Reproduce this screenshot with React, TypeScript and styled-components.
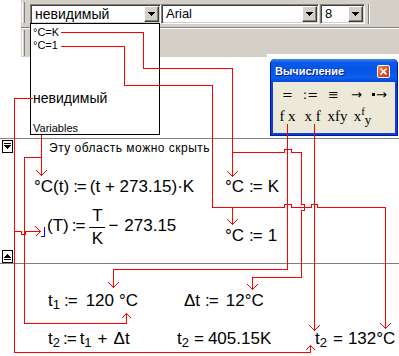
import React from "react";
import styled, { createGlobalStyle } from "styled-components";

const GlobalStyle = createGlobalStyle`
  html, body { margin: 0; padding: 0; background: #fff; }
  #root { width: 399px; height: 356px; }
`;

const Page = styled.div`
  position: relative;
  width: 399px;
  height: 356px;
  overflow: hidden;
  background: #fff;
  color: #000;
  font-family: "Liberation Sans", Arial, sans-serif;
  display: flex;
  flex-direction: column;
`;

/* ---------- toolbar ---------- */
const Toolbar = styled.div`
  margin-left: 21px;
  height: 57px;
  flex: none;
  background: #d4d0c8;
  display: flex;
  flex-direction: column;
`;
const Band = styled.div<{ $h: number; $pt: number }>`
  height: ${(p) => p.$h}px;
  padding: ${(p) => p.$pt}px 0 0 1px;
  box-sizing: border-box;
  display: flex;
  align-items: flex-start;
`;
const Etch = styled.div`
  height: 2px;
  box-sizing: border-box;
  border-top: 1px solid #808080;
  border-bottom: 1px solid #fff;
`;
const Gripper = styled.div<{ $h: number; $mt: number }>`
  width: 3px;
  height: ${(p) => p.$h}px;
  margin-top: ${(p) => p.$mt}px;
  margin-right: 5px;
  box-sizing: border-box;
  border-left: 1px solid #fff;
  border-right: 1px solid #808080;
`;
const Combo = styled.div<{ $w: number; $ml?: number }>`
  width: ${(p) => p.$w}px;
  margin-left: ${(p) => p.$ml ?? 0}px;
  height: 20px;
  box-sizing: border-box;
  display: flex;
  background: #fff;
  border: 1px solid;
  border-color: #808080 #fff #fff #808080;
  box-shadow: inset 1px 1px 0 #404040, inset -1px -1px 0 #d4d0c8;
  padding: 1px;
`;
const ComboText = styled.div<{ $size?: number }>`
  flex: 1;
  padding-left: 3px;
  font-family: "Liberation Sans", Arial, sans-serif;
  font-size: ${(p) => p.$size ?? 13}px;
  line-height: 16px;
  white-space: nowrap;
  overflow: hidden;
`;
const DropButton = styled.div`
  width: 15px;
  height: 16px;
  box-sizing: border-box;
  background: #d4d0c8;
  border: 1px solid;
  border-color: #fff #404040 #404040 #fff;
  box-shadow: inset -1px -1px 0 #808080;
  display: flex;
  align-items: center;
  justify-content: center;
`;
const VSep = styled.div`
  width: 2px;
  height: 20px;
  margin-left: 3px;
  box-sizing: border-box;
  border-left: 1px solid #808080;
  border-right: 1px solid #fff;
`;

const DownTri = () => (
  <svg width="7" height="4" viewBox="0 0 7 4" shapeRendering="crispEdges">
    <polygon points="0,0 7,0 3.5,4" fill="#000" />
  </svg>
);

/* ---------- style dropdown list ---------- */
const StyleList = styled.div`
  position: absolute;
  left: 30px;
  top: 23px;
  width: 130px;
  height: 112px;
  box-sizing: border-box;
  border: 1px solid #000;
  background: #fff;
  padding: 2px 0 0 2px;
  display: flex;
  flex-direction: column;
  z-index: 2;
`;
const StyleItem = styled.div<{ $size: number; $lh: number; $mt: number }>`
  font-size: ${(p) => p.$size}px;
  line-height: ${(p) => p.$lh}px;
  margin-top: ${(p) => p.$mt}px;
  white-space: nowrap;
`;

/* ---------- floating palette ---------- */
const Float = styled.div`
  position: absolute;
  left: 267px;
  top: 54px;
  width: 132px;
  box-sizing: border-box;
  padding: 5px 1px 0 3px;
  background: #fff;
  z-index: 2;
`;
const Win = styled.div`
  width: 128px;
  height: 77px;
  box-sizing: border-box;
  display: flex;
  flex-direction: column;
  background: #0b3fd8;
  border: 1px solid #001a9e;
  border-top: none;
  border-radius: 5px 5px 0 0;
  padding: 0 2px 2px 2px;
`;
const TitleBar = styled.div`
  height: 23px;
  flex: none;
  margin: 0 -2px;
  display: flex;
  align-items: center;
  justify-content: space-between;
  padding: 0 7px 0 4px;
  background: linear-gradient(#3d8bf8 0%, #0a5ce8 14%, #0553e4 45%, #0a5ef0 80%, #0546d4 100%);
  border-radius: 5px 5px 0 0;
  color: #fff;
  font: bold 11px "Liberation Sans", Arial, sans-serif;
  text-shadow: 1px 1px 0 #0a1e8c;
`;
const CloseBtn = styled.div`
  width: 13px;
  height: 13px;
  box-sizing: border-box;
  margin-top: 1px;
  border: 1px solid #fff;
  border-radius: 2px;
  background: linear-gradient(135deg, #f08a6a 0%, #e2532c 45%, #c93a16 100%);
  display: flex;
  align-items: center;
  justify-content: center;
`;
const PaletteBody = styled.div`
  flex: 1;
  background: #ece9d8;
  padding-top: 1px;
  display: flex;
  flex-direction: column;
`;
const PaletteRow = styled.div<{ $cols: number; $cw: number; $pl: number; $serif?: boolean }>`
  height: 22px;
  display: grid;
  grid-template-columns: repeat(${(p) => p.$cols}, ${(p) => p.$cw}px);
  padding-left: ${(p) => p.$pl}px;
  align-items: center;
  justify-items: center;
  font-family: ${(p) => (p.$serif ? '"Liberation Serif", "Times New Roman", serif' : '"DejaVu Sans", sans-serif')};
  font-size: ${(p) => (p.$serif ? 15 : 13)}px;
  line-height: 1;
  white-space: nowrap;
`;
const EvalIcon = styled.span`
  display: flex;
  align-items: center;
  gap: 1px;
`;
const Dot = styled.span`
  width: 3px;
  height: 3px;
  background: #000;
`;
const Sup = styled.span`
  font-size: 11px;
  vertical-align: 6px;
  line-height: 0;
`;
const SubS = styled.span`
  font-size: 13px;
  vertical-align: -3px;
  line-height: 0;
`;

/* ---------- worksheet ---------- */
const Worksheet = styled.div`
  flex: 1;
  padding-top: 81px;
`;
const Collapsible = styled.section`
  height: 126px;
  box-sizing: border-box;
  border-top: 1px solid #808080;
  border-bottom: 1px solid #808080;
  padding: 1px 0 0 2px;
  display: flex;
  flex-direction: column;
  justify-content: space-between;
`;
const HeadRow = styled.div`
  display: flex;
  align-items: flex-start;
`;
const ToggleBox = styled.div`
  width: 11px;
  height: 13px;
  box-sizing: border-box;
  border: 1px solid #000;
  background: #fff;
  display: flex;
  align-items: center;
  justify-content: center;
`;
const Note = styled.div`
  margin: 1px 0 0 36px;
  font: 12px/14px "Liberation Sans", Arial, sans-serif;
  letter-spacing: 0.5px;
  white-space: nowrap;
`;

const CollapseIcon = ({ up }: { up?: boolean }) => (
  <svg width="9" height="11" viewBox="0 0 9 11" shapeRendering="crispEdges">
    {up ? (
      <>
        <polygon points="4.5,3 1,7 8,7" fill="#000" />
        <rect x="1" y="8" width="7" height="1" fill="#000" />
      </>
    ) : (
      <>
        <rect x="1" y="2" width="7" height="1" fill="#000" />
        <polygon points="1,4 8,4 4.5,8" fill="#000" />
      </>
    )}
  </svg>
);

/* ---------- math regions ---------- */
const Region = styled.div<{ $x: number; $y: number }>`
  position: absolute;
  left: ${(p) => p.$x}px;
  top: ${(p) => p.$y}px;
  display: flex;
  align-items: flex-start;
  font: 17px/20px "Liberation Sans", Arial, sans-serif;
  white-space: pre;
  z-index: 1;
`;
const Tok = styled.span<{ $ml?: number; $mt?: number }>`
  margin-left: ${(p) => p.$ml ?? 0}px;
  margin-top: ${(p) => p.$mt ?? 0}px;
`;
const Assign = styled(Tok)`
  letter-spacing: -1px;
`;
const Sub = styled.span`
  font-size: 13px;
  vertical-align: -3px;
  line-height: 0;
`;
const Placeholder = styled.span`
  width: 4px;
  height: 10px;
  margin-top: 20px;
  box-sizing: border-box;
  border-right: 1px solid #0000ff;
  border-bottom: 1px solid #0000ff;
`;
const Fraction = styled.span<{ $ml: number }>`
  margin-left: ${(p) => p.$ml}px;
  display: flex;
  flex-direction: column;
  align-items: center;
  width: 16px;
  line-height: 18px;
`;
const FracBar = styled.span`
  align-self: stretch;
  height: 1px;
  margin: 2px 0;
  background: #000;
`;

/* ---------- wires ---------- */
const Wires = styled.svg`
  position: absolute;
  left: 0;
  top: 0;
  z-index: 3;
  pointer-events: none;
`;

type Pt = [number, number];
const wires: Pt[][] = [
  [[60, 32], [143, 32], [143, 68], [232, 68], [232, 152], [284, 152], [284, 149], [291, 149], [291, 152], [301, 152], [301, 204], [304, 204], [304, 210], [301, 210], [301, 277], [252, 277], [252, 289]],
  [[232, 152], [232, 176]],
  [[60, 46], [124, 46], [124, 85], [212, 85], [212, 207], [284, 207], [284, 204], [291, 204], [291, 207], [311, 207], [311, 204], [317, 204], [317, 207], [385, 207], [385, 328]],
  [[232, 207], [232, 224]],
  [[32, 98], [14, 98], [14, 352], [310, 352], [310, 345]],
  [[14, 231], [21, 231], [21, 234], [25, 234], [25, 231], [40, 231]],
  [[41, 134], [41, 175]],
  [[41, 157], [24, 157], [24, 323], [126, 323], [126, 313]],
  [[287, 123], [287, 269], [113, 269], [113, 287]],
  [[314, 123], [314, 330]],
];
const arrows: [number, number, "d" | "u" | "r"][] = [
  [232, 176, "d"], [252, 289, "d"], [232, 224, "d"], [385, 328, "d"], [310, 345, "u"],
  [40, 231, "r"], [41, 175, "d"], [126, 313, "u"], [113, 287, "d"], [314, 330, "d"],
];
const toPath = (pts: Pt[]) =>
  pts.map(([x, y], i) => `${i ? "L" : "M"}${x + 0.5} ${y + 0.5}`).join(" ");
const arrowPts = (x: number, y: number, d: string): Pt[] => {
  const s = 5;
  if (d === "d") return [[x - s, y - s], [x, y], [x + s, y - s]];
  if (d === "u") return [[x - s, y + s], [x, y], [x + s, y + s]];
  return [[x - s, y - s], [x, y], [x - s, y + s]];
};

export default function App() {
  return (
    <>
      <GlobalStyle />
      <Page>
        <Toolbar>
          <Band $h={27} $pt={4}>
            <Gripper $h={21} $mt={-2} />
            <Combo $w={131}>
              <ComboText $size={14}>невидимый</ComboText>
              <DropButton><DownTri /></DropButton>
            </Combo>
            <Combo $w={158} $ml={0}>
              <ComboText $size={13}>Arial</ComboText>
              <DropButton><DownTri /></DropButton>
            </Combo>
            <Combo $w={45} $ml={1}>
              <ComboText $size={13}>8</ComboText>
              <DropButton><DownTri /></DropButton>
            </Combo>
            <VSep />
          </Band>
          <Etch />
          <Band $h={28} $pt={1}>
            <Gripper $h={26} $mt={0} />
          </Band>
        </Toolbar>

        <Worksheet>
          <Collapsible>
            <HeadRow>
              <ToggleBox><CollapseIcon /></ToggleBox>
              <Note>Эту область можно скрыть</Note>
            </HeadRow>
            <ToggleBox><CollapseIcon up /></ToggleBox>
          </Collapsible>
        </Worksheet>

        <StyleList>
          <StyleItem $size={11} $lh={13} $mt={0}>°C=K</StyleItem>
          <StyleItem $size={11} $lh={13} $mt={0}>°C=1</StyleItem>
          <StyleItem $size={14} $lh={15} $mt={39}>невидимый</StyleItem>
          <StyleItem $size={11} $lh={11} $mt={17}>Variables</StyleItem>
        </StyleList>

        <Float>
          <Win>
            <TitleBar>
              <span>Вычисление</span>
              <CloseBtn>
                <svg width="7" height="7" viewBox="0 0 7 7">
                  <path d="M0.5 0.5 L6.5 6.5 M6.5 0.5 L0.5 6.5" stroke="#fff" strokeWidth="1.6" />
                </svg>
              </CloseBtn>
            </TitleBar>
            <PaletteBody>
              <PaletteRow $cols={5} $cw={23} $pl={3}>
                <span>=</span>
                <span>:=</span>
                <span>≡</span>
                <span>→</span>
                <EvalIcon><Dot />→</EvalIcon>
              </PaletteRow>
              <PaletteRow $cols={4} $cw={25} $pl={2} $serif>
                <span>f x</span>
                <span>x f</span>
                <span>xfy</span>
                <span>x<Sup>f</Sup><SubS>y</SubS></span>
              </PaletteRow>
            </PaletteBody>
          </Win>
        </Float>

        <Region $x={34} $y={177}>
          <Tok>°C(t)</Tok>
          <Assign $ml={4}>:=</Assign>
          <Tok $ml={4}>(t + 273.15)·K</Tok>
        </Region>
        <Region $x={225} $y={177}>
          <Tok>°C</Tok>
          <Assign $ml={5}>:=</Assign>
          <Tok $ml={6}>K</Tok>
        </Region>
        <Region $x={41} $y={207}>
          <Placeholder />
          <Tok $ml={2} $mt={9}>(T)</Tok>
          <Assign $ml={3} $mt={9}>:=</Assign>
          <Fraction $ml={5}>
            <span>T</span>
            <FracBar />
            <span>K</span>
          </Fraction>
          <Tok $ml={3} $mt={9}>−</Tok>
          <Tok $ml={6} $mt={9}>273.15</Tok>
        </Region>
        <Region $x={225} $y={226}>
          <Tok>°C</Tok>
          <Assign $ml={5}>:=</Assign>
          <Tok $ml={6}>1</Tok>
        </Region>
        <Region $x={48} $y={291}>
          <Tok>t<Sub>1</Sub></Tok>
          <Assign $ml={4}>:=</Assign>
          <Tok $ml={9}>120</Tok>
          <Tok $ml={5}>°C</Tok>
        </Region>
        <Region $x={184} $y={291}>
          <Tok>Δt</Tok>
          <Assign $ml={5}>:=</Assign>
          <Tok $ml={8}>12°C</Tok>
        </Region>
        <Region $x={48} $y={329}>
          <Tok>t<Sub>2</Sub></Tok>
          <Assign $ml={3}>:=</Assign>
          <Tok $ml={4}>t<Sub>1</Sub></Tok>
          <Tok $ml={6}>+</Tok>
          <Tok $ml={6}>Δt</Tok>
        </Region>
        <Region $x={177} $y={329}>
          <Tok>t<Sub>2</Sub></Tok>
          <Tok $ml={5}>=</Tok>
          <Tok $ml={4}>405.15K</Tok>
        </Region>
        <Region $x={315} $y={329}>
          <Tok>t<Sub>2</Sub></Tok>
          <Tok $ml={6}>=</Tok>
          <Tok $ml={5}>132°C</Tok>
        </Region>

        <Wires width="399" height="356" viewBox="0 0 399 356" shapeRendering="crispEdges">
          <g fill="none" stroke="#ff0000" strokeWidth="1">
            {wires.map((w, i) => (
              <path key={i} d={toPath(w)} />
            ))}
            {arrows.map(([x, y, d], i) => (
              <path key={"a" + i} d={toPath(arrowPts(x, y, d))} />
            ))}
          </g>
        </Wires>
      </Page>
    </>
  );
}
